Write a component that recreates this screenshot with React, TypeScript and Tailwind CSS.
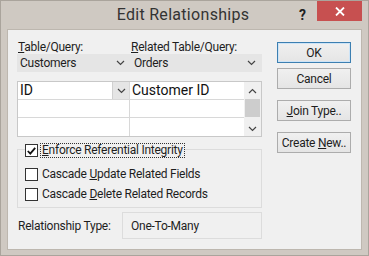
import React from "react";

const ui = { fontFamily: '"Segoe UI", Roboto, "Noto Sans", sans-serif' };

function Chevron({ up = false }: { up?: boolean }) {
  return (
    <svg width="9" height="6" viewBox="0 0 9 6" className={up ? "rotate-180" : ""}>
      <path d="M1 1 L4.5 4.5 L8 1" fill="none" stroke="#444" strokeWidth="1.2" />
    </svg>
  );
}

function Combo({ value, className }: { value: string; className: string }) {
  return (
    <div className={`h-[18px] bg-[#e5e5e5] flex items-center justify-between pl-[3px] pr-[6px] ${className}`}>
      <span className="text-[12px] text-[#1e1e1e]">{value}</span>
      <Chevron />
    </div>
  );
}

function Button({ children, primary = false }: { children: React.ReactNode; primary?: boolean }) {
  return (
    <div
      className={`h-[21px] w-[74px] flex items-center justify-center text-[12px] text-[#1e1e1e] bg-gradient-to-b from-[#f0f0f0] to-[#e5e5e5] border ${
        primary ? "border-[#3c7fb1] shadow-[inset_0_0_0_1px_#cde4f7]" : "border-[#acacac]"
      }`}
    >
      {children}
    </div>
  );
}

function CheckRow({ label, checked = false, focus = false, className = "" }: { label: React.ReactNode; checked?: boolean; focus?: boolean; className?: string }) {
  return (
    <div className={`flex items-center h-[15px] ${className}`}>
      <div className="w-[13px] h-[13px] border border-[#333] bg-white flex items-center justify-center">
        {checked && (
          <svg width="9" height="8" viewBox="0 0 9 8">
            <path d="M0.8 4 L3.3 6.6 L8.2 0.8" fill="none" stroke="#111" strokeWidth="1.8" />
          </svg>
        )}
      </div>
      <span
        className={`ml-[2px] px-[1px] text-[12px] leading-[13px] text-[#1e1e1e] bg-[#f0f0f0] ${
          focus ? "border border-dotted border-[#333]" : "border border-transparent"
        }`}
      >
        {label}
      </span>
    </div>
  );
}

export default function App() {
  return (
    <div style={ui} className="w-[369px] h-[256px] bg-[#cfc9c2] border border-[#aaa49c] relative overflow-hidden select-none tracking-[-0.25px]">
      {/* title bar */}
      <div className="h-[28px] flex items-start">
        <div className="flex-1 h-[28px] flex items-center justify-center pl-[66px]">
          <span className="text-[16px] text-[#333] tracking-[0.3px]">Edit Relationships</span>
        </div>
        <div className="w-[8px] pt-[4px] text-[14px] font-bold text-[#222]">?</div>
        <div className="ml-[10px] mr-[6px] w-[45px] h-[20px] bg-[#c75050] flex items-center justify-center">
          <svg width="10" height="9" viewBox="0 0 10 9">
            <path d="M1 0.5 L9 8.5 M9 0.5 L1 8.5" stroke="#fff" strokeWidth="1.8" />
          </svg>
        </div>
      </div>

      {/* client area */}
      <div className="ml-[6px] w-[355px] h-[221px] border border-[#bdb7af] bg-[#f0f0f0] flex">
        {/* left column */}
        <div className="ml-[9px] w-[245px] flex flex-col">
          <div className="mt-[10px] flex text-[12px] leading-[14px] text-[#1e1e1e]">
            <span className="pl-[1px] w-[114px]"><u>T</u>able/Query:</span>
            <span><u>R</u>elated Table/Query:</span>
          </div>
          <div className="flex">
            <Combo value="Customers" className="w-[114px]" />
            <Combo value="Orders" className="w-[131px]" />
          </div>

          {/* field grid */}
          <div className="mt-[9px] h-[56px] border border-[#c8c8c8] bg-white flex">
            <div className="flex-1 flex flex-col">
              {[0, 1, 2].map((r) => (
                <div key={r} className={`flex ${r < 2 ? "h-[18px] border-b border-[#d8d8d8]" : "flex-1"}`}>
                  <div className="w-[112px] border-r border-[#d8d8d8] flex items-center">
                    {r === 0 && (
                      <>
                        <span className="flex-1 pl-[2px] text-[14px] text-[#111] tracking-normal">ID</span>
                        <div className="w-[17px] h-full bg-[#e5e5e5] border-l border-[#d0d0d0] flex items-center justify-center">
                          <Chevron />
                        </div>
                      </>
                    )}
                  </div>
                  <div className="flex-1 flex items-center pl-[2px]">
                    {r === 0 && <span className="text-[14px] text-[#111] tracking-normal">Customer ID</span>}
                  </div>
                </div>
              ))}
            </div>
            {/* scrollbar */}
            <div className="w-[17px] bg-[#f0f0f0] flex flex-col">
              <div className="h-[17px] flex items-center justify-center">
                <Chevron up />
              </div>
              <div className="mx-[1px] h-[18px] bg-[#cdcdcd]" />
              <div className="flex-1 flex items-end justify-center pb-[4px]">
                <Chevron />
              </div>
            </div>
          </div>

          {/* referential integrity group */}
          <div className="mt-[12px] h-[59px] border border-[#dcdcdc] pl-[7px] flex flex-col">
            <CheckRow checked focus className="-mt-[7px]" label={<><u>E</u>nforce Referential Integrity</>} />
            <CheckRow className="mt-[9px]" label={<>Cascade <u>U</u>pdate Related Fields</>} />
            <CheckRow className="mt-[5px]" label={<>Cascade <u>D</u>elete Related Records</>} />
          </div>

          <div className="mt-[4px] flex items-center h-[27px]">
            <span className="w-[105px] pl-[1px] text-[12px] text-[#1e1e1e]">Relationship Type:</span>
            <div className="flex-1 h-[27px] border border-[#dcdcdc] flex items-center pl-[8px] text-[12px] text-[#1e1e1e]">
              One-To-Many
            </div>
          </div>
        </div>

        {/* buttons */}
        <div className="ml-[15px] flex flex-col">
          <div className="mt-[12px]"><Button primary>OK</Button></div>
          <div className="mt-[5px]"><Button>Cancel</Button></div>
          <div className="mt-[11px]"><Button><span><u>J</u>oin Type..</span></Button></div>
          <div className="mt-[11px]"><Button><span>Create <u>N</u>ew..</span></Button></div>
        </div>
      </div>
    </div>
  );
}
